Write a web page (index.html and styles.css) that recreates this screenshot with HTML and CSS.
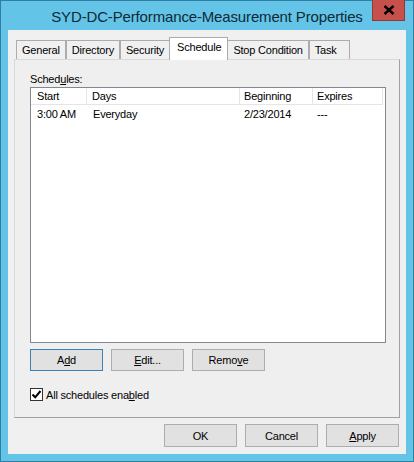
FILE: index.html
```html
<!DOCTYPE html>
<html>
<head>
<meta charset="utf-8">
<link rel="stylesheet" href="styles.css">
</head>
<body>
<div class="window">
  <div class="titlebar">
    <div class="title">SYD-DC-Performance-Measurement Properties</div>
    <div class="close"><svg width="12" height="10" viewBox="0 0 12 10"><path d="M1.5 1 L10.5 9 M10.5 1 L1.5 9" stroke="#000" stroke-width="2.4"/></svg></div>
  </div>
  <div class="client">
    <div class="tabs">
      <div class="tab">General</div>
      <div class="tab">Directory</div>
      <div class="tab">Security</div>
      <div class="tab active">Schedule</div>
      <div class="tab">Stop Condition</div>
      <div class="tab">Task</div>
    </div>
    <div class="panel">
      <div class="label">Sched<u>u</u>les:</div>
      <div class="list">
        <div class="row head">
          <div class="c c1">Start</div>
          <div class="c c2">Days</div>
          <div class="c c3">Beginning</div>
          <div class="c c4">Expires</div>
        </div>
        <div class="row">
          <div class="c c1">3:00 AM</div>
          <div class="c c2">Everyday</div>
          <div class="c c3">2/23/2014</div>
          <div class="c c4">---</div>
        </div>
      </div>
      <div class="btnrow">
        <div class="btn default">A<u>d</u>d</div>
        <div class="btn"><u>E</u>dit...</div>
        <div class="btn">Remo<u>v</u>e</div>
      </div>
      <div class="check">
        <span class="box"><svg width="11" height="11" viewBox="0 0 11 11"><path d="M1.5 5.5 L4.2 8.3 L9.5 2" fill="none" stroke="#000" stroke-width="2"/></svg></span>
        <span>All schedules ena<u>b</u>led</span>
      </div>
    </div>
    <div class="footer">
      <div class="btn">OK</div>
      <div class="btn">Cancel</div>
      <div class="btn"><u>A</u>pply</div>
    </div>
  </div>
</div>
</body>
</html>
```
FILE: styles.css
```css
* { box-sizing: border-box; }
html, body { margin: 0; padding: 0; }
body {
  width: 414px;
  height: 462px;
  font-family: "Liberation Sans", Arial, sans-serif;
  font-size: 11px;
  letter-spacing: -0.2px;
  color: #000;
  overflow: hidden;
}
.window {
  width: 414px;
  height: 462px;
  background: #63c4e7;
  border: 1px solid #2f7fa3;
  padding: 0 7px 7px 7px;
  display: flex;
  flex-direction: column;
}
.titlebar {
  position: relative;
  height: 29px;
  flex: none;
  display: flex;
  align-items: center;
  justify-content: center;
}
.title {
  font-size: 15px;
  letter-spacing: -0.15px;
  color: #0f2a36;
  margin-top: 1px;
}
.close {
  position: absolute;
  top: -1px;
  right: 1px;
  width: 33px;
  height: 21px;
  background: #c7504a;
  border: 1px solid #8e3a35;
  border-top: none;
  display: flex;
  align-items: center;
  justify-content: center;
}
.client {
  flex: 1;
  background: #f0f0f0;
  padding: 7px 6px 7px 6px;
  display: flex;
  flex-direction: column;
}
.tabs {
  display: flex;
  align-items: flex-end;
  padding-left: 2px;
  height: 22px;
  flex: none;
  position: relative;
  z-index: 1;
}
.tab {
  height: 19px;
  min-width: 41px;
  padding: 2px 5px 0 5px;
  border: 1px solid #acacac;
  border-bottom: none;
  background: #f0f0f0;
  margin-right: 0;
  line-height: 15px;
  white-space: nowrap;
}
.tab.active {
  height: 23px;
  background: #fff;
  margin-left: -1px;
  margin-right: -1px;
  padding: 2px 6px 0 7px;
  position: relative;
  margin-bottom: -1px;
}
.panel {
  height: 359px;
  flex: none;
  border: 1px solid #a0a0a0;
  border-top-color: #d9d9d9;
  border-left-color: #d9d9d9;
  background: #efefef;
  padding: 11px 13px 0 15px;
  display: flex;
  flex-direction: column;
}
.label {
  height: 16px;
  line-height: 16px;
}
.list {
  height: 256px;
  flex: none;
  border: 1px solid #828790;
  background: #fff;
}
.row {
  display: flex;
  height: 17px;
  line-height: 17px;
}
.row.head {
  line-height: 16px;
  border-bottom: 1px solid #e5e5e5;
  margin-right: 2px;
}
.row.head .c { border-right: 1px solid #e5e5e5; }
.row.head + .row { margin-top: 1px; }
.c { padding-left: 6px; white-space: nowrap; }
.c1 { width: 56px; }
.c2 { width: 153px; }
.c3 { width: 73px; padding-left: 4px; }
.c4 { width: 70px; padding-left: 4px; }
.row.head .c2 { padding-left: 5px; }
.btnrow {
  display: flex;
  gap: 8px;
  margin-top: 6px;
}
.btn {
  width: 73px;
  height: 22px;
  background: #e1e1e1;
  border: 1px solid #adadad;
  display: flex;
  align-items: center;
  justify-content: center;
}
.btn.default {
  border-color: #3c7fb1;
}
.check {
  display: flex;
  align-items: center;
  gap: 3px;
  margin-top: 17px;
}
.box {
  width: 13px;
  height: 13px;
  border: 1px solid #333;
  background: #fff;
  display: flex;
  align-items: center;
  justify-content: center;
}
.footer {
  display: flex;
  justify-content: flex-end;
  gap: 8px;
  margin-top: 6px;
  padding-right: 1px;
  flex: none;
}
.footer .btn { height: 23px; }
```
